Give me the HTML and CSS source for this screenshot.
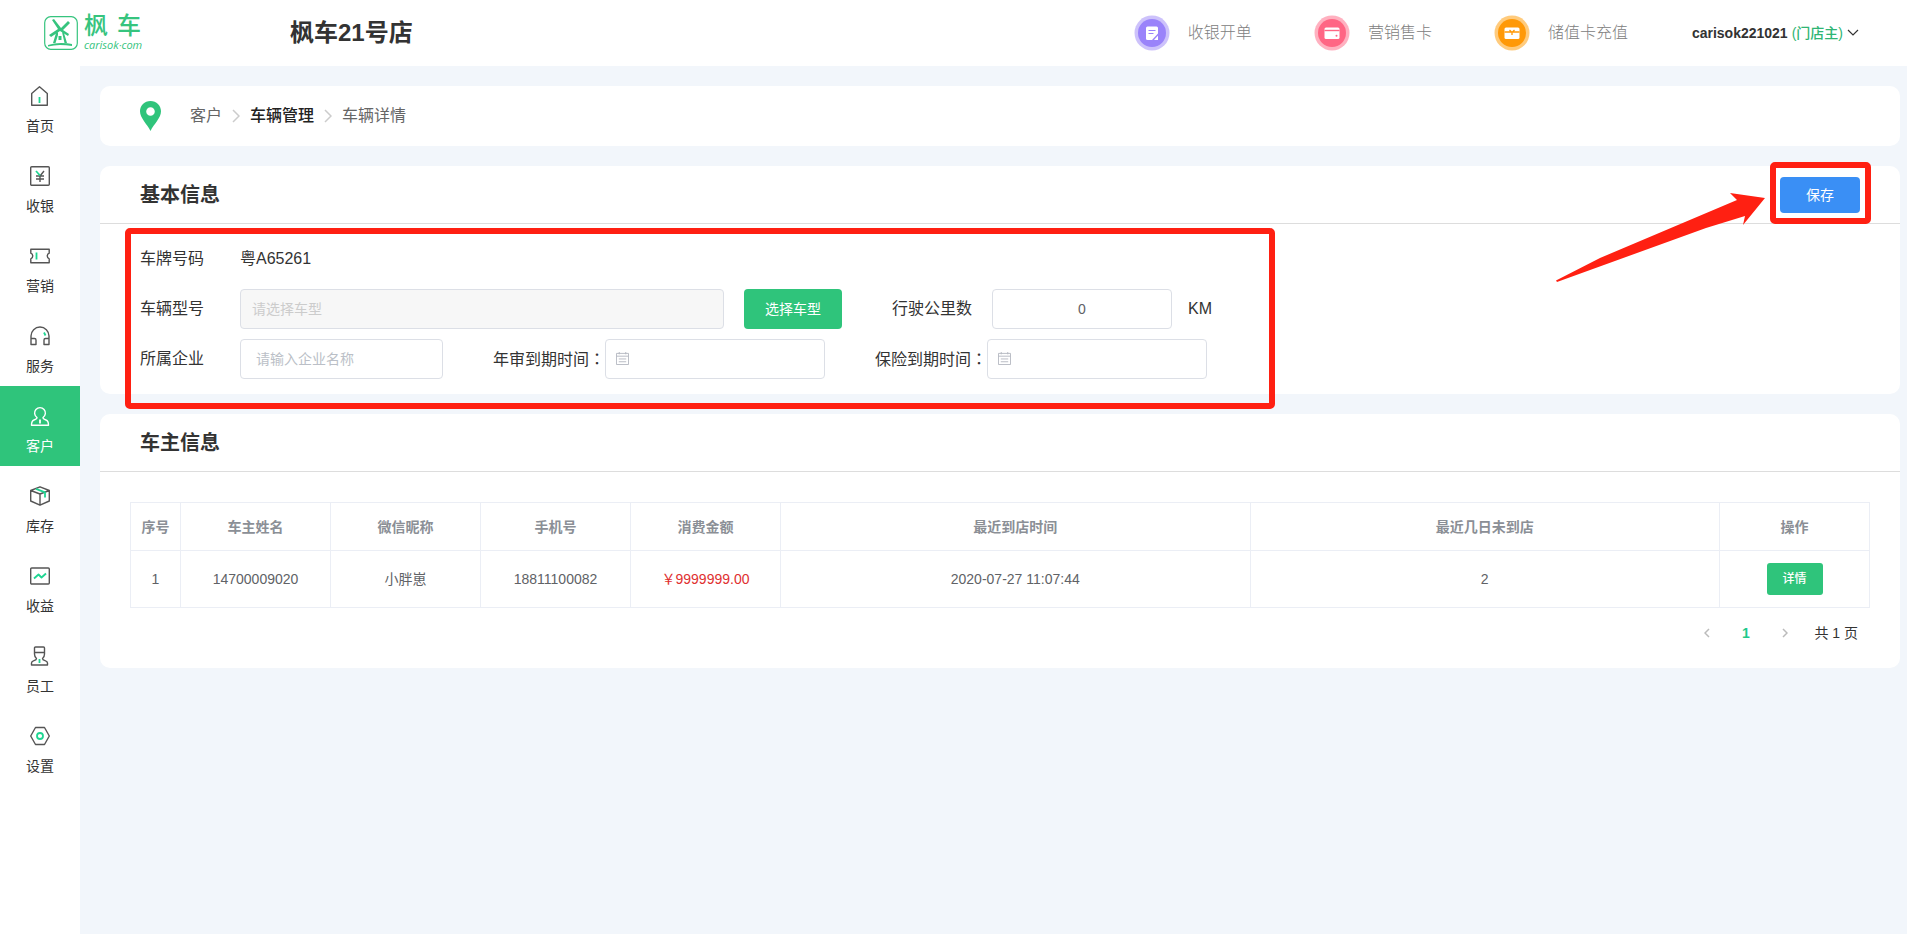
FILE: index.html
```
<!DOCTYPE html>
<html lang="zh-CN">
<head>
<meta charset="utf-8">
<title>车辆详情</title>
<link rel="stylesheet" href="styles.css">
</head>
<body>
<header class="topbar">
  <a class="logo" href="#" aria-label="枫车">
    <svg class="logo-mark" viewBox="0 0 34 34" aria-hidden="true">
      <rect x="0.7" y="0.7" width="32.6" height="32.6" rx="6" fill="none" stroke="#36c47e" stroke-width="1.200"/>
      <g fill="#36c47e">
        <path d="M8 4l2-1 7 9 7-7 2 2-7 7 6 4-1 2-8-5-9 6-2-2 9-6z"/>
        <path d="M12 17l2-1v3l-2.500 8H9zM18 16l2 1 3 10h-2.500zM14.500 20h3v4h-3z"/>
        <path d="M4 29q6-2 13-2t11 1v2q-6-1-12-1t-12 1.500z"/>
      </g>
    </svg>
    <span class="logo-words"><span class="logo-cn"><span>枫</span><span>车</span></span><span class="logo-en">carisok·com</span></span>
  </a>
  <h1 class="shop">枫车21号店</h1>
  <nav class="quick" aria-label="快捷入口">
    <a href="#"><svg viewBox="0 0 36 36" aria-hidden="true"><circle cx="18" cy="18" r="17.500" fill="#cdc2fb"/><circle cx="18" cy="18" r="14" fill="#9a83fa"/><path d="M13.500 11.500h9q1.500 0 1.500 1.500v12h-10.500q-1.500 0-1.500-1.500V13q0-1.500 1.500-1.500z" fill="#fff"/><path d="M14.500 15.500h7M14.500 18.500h5" stroke="#9a83fa" stroke-width="1.200"/><path d="M18.500 25.500l6-6.500" stroke="#9a83fa" stroke-width="1.400"/></svg>收银开单</a>
    <a href="#"><svg viewBox="0 0 36 36" aria-hidden="true"><circle cx="18" cy="18" r="17.500" fill="#ffb1c0"/><circle cx="18" cy="18" r="14" fill="#ff6684"/><rect x="10.500" y="12.500" width="15" height="11.500" rx="1.500" fill="#fff"/><path d="M10.500 15.500h15" stroke="#ff6684" stroke-width="1.400"/><circle cx="22.500" cy="20.800" r="1" fill="#ff6684"/></svg>营销售卡</a>
    <a href="#"><svg viewBox="0 0 36 36" aria-hidden="true"><circle cx="18" cy="18" r="17.500" fill="#ffcb7d"/><circle cx="18" cy="18" r="14" fill="#ff9908"/><rect x="10.500" y="12.500" width="15" height="11.500" rx="1.500" fill="#fff"/><path d="M10.500 17h15M15.500 15l2.500 2.500 2.500-2.500M18 17.500v2.500" stroke="#ff9908" stroke-width="1.300" fill="none"/></svg>储值卡充值</a>
  </nav>
  <button class="user" type="button"><span>carisok221021</span><span class="role">(门店主)</span><svg viewBox="0 0 12 8" aria-hidden="true"><path d="M1 1l5 5 5-5" fill="none" stroke="#333" stroke-width="1.200"/></svg></button>
</header>

<div class="shell">
  <nav class="side" aria-label="主菜单">
    <a href="#"><svg viewBox="0 0 20 20"><path d="M1.700 7.500L9.500 .8l7.800 6.700v11.700H1.700z"/><path class="hl" d="M9.500 11v6"/></svg>首页</a>
    <a href="#"><svg viewBox="0 0 20 20"><rect x=".7" y=".7" width="18.600" height="18.600" rx="1"/><path d="M14 5l-4 5M6 10h8M6 13h8M10 10v6"/><path class="hl" d="M6 5l4 4.500"/></svg>收银</a>
    <a href="#"><svg viewBox="0 0 20 20"><path d="M.8 3.300h18.400v3.900a3 3 0 0 0 0 5.600v3.900H.8v-3.900a3 3 0 0 0 0-5.600z"/><path class="hl" d="M6.500 6.500v7"/></svg>营销</a>
    <a href="#"><svg viewBox="0 0 20 20"><path d="M1 17.500V10a9 9 0 0 1 18 0v7.500M1 12.500h3.500q1.500 0 1.500 1.500v4.500H1zM19 12.500h-3.500q-1.500 0-1.500 1.500v4.500h5z"/><path class="hl" d="M14 6.500l1.500 3"/></svg>服务</a>
    <a href="#" class="on" aria-current="page"><svg viewBox="0 0 20 20"><path d="M7 11.500a5.400 5.400 0 1 1 6 0q0 1.500 3 2.500 2.500 1 2.500 5.200h-17q0-4.200 2.500-5.200 3-1 3-2.500z"/><path class="hl" d="M10 13.500v4"/></svg>客户</a>
    <a href="#"><svg viewBox="0 0 20 20"><path d="M10 .8l9.300 3.700v10.500L10 19.200.7 15V4.500zM.7 4.500L10 8l9.300-3.500M10 8v11"/><path class="hl" d="M6 2.800l9 3.600v5"/></svg>库存</a>
    <a href="#"><svg viewBox="0 0 20 20"><rect x=".7" y="2" width="18.600" height="16" rx="1"/><path class="hl" d="M4 12.500l4.500-4 3 3L16 7.500"/></svg>收益</a>
    <a href="#"><svg viewBox="0 0 20 20"><path d="M4.500 2q0-1 1-1h8q1 0 1 1v6q0 3-2 4.500 0 1.500 2.500 2.200 2.500.8 2.500 2.300v2H1.500v-2q0-1.500 2.500-2.300 2.500-.7 2.500-2.200-2-1.500-2-4.500zM4.500 6.500h10"/><path class="hl" d="M9.500 13v4"/></svg>员工</a>
    <a href="#"><svg viewBox="0 0 20 20"><path d="M5.500 1.500h9l4.800 8.500-4.800 8.500h-9L.7 10z"/><circle class="hl" cx="10" cy="10" r="3"/></svg>设置</a>
  </nav>

  <main class="main">
    <nav class="card crumbs" aria-label="面包屑">
      <svg class="pin" viewBox="0 0 21 30" aria-hidden="true"><path fill-rule="evenodd" fill="#2fc47b" d="M10.500 0C4.500 0 0 4.500 0 10.300 0 17 7 23 10.500 30 14 23 21 17 21 10.300 21 4.500 16.500 0 10.500 0zm0 6.200a4.300 4.300 0 1 1 0 8.600 4.300 4.300 0 0 1 0-8.600z"/></svg>
      <a href="#">客户</a>
      <svg class="sep" viewBox="0 0 8 14" aria-hidden="true"><path d="M1 1l6 6-6 6"/></svg>
      <a href="#" class="strong">车辆管理</a>
      <svg class="sep" viewBox="0 0 8 14" aria-hidden="true"><path d="M1 1l6 6-6 6"/></svg>
      <span>车辆详情</span>
    </nav>

    <section class="card basic">
      <div class="card-head"><h2>基本信息</h2><button class="save" type="submit" form="vehicle">保存</button></div>
      <form class="form" id="vehicle">
        <div class="row"><span class="lab">车牌号码</span><span>粤A65261</span></div>
        <div class="row">
          <label class="lab" for="model">车辆型号</label><input class="model" id="model" placeholder="请选择车型" disabled>
          <button class="pick" type="button">选择车型</button>
          <label class="km-lab" for="km">行驶公里数</label><input class="km" id="km" value="0"><span class="unit">KM</span>
        </div>
        <div class="row">
          <label class="lab" for="corp">所属企业</label><input class="corp" id="corp" placeholder="请输入企业名称">
          <label class="date-lab" for="check">年审到期时间<span class="colon" lang="zh-TW">：</span></label>
          <span class="date"><input id="check"><svg viewBox="0 0 14 14" aria-hidden="true"><path d="M.5 1.500h13v12H.5zM.5 4.500h13M3.500 0v2.500M10.500 0v2.500M3 7.500h8M3 10.500h8"/></svg></span>
          <label class="date-lab" for="insure">保险到期时间<span class="colon" lang="zh-TW">：</span></label>
          <span class="date"><input id="insure"><svg viewBox="0 0 14 14" aria-hidden="true"><path d="M.5 1.500h13v12H.5zM.5 4.500h13M3.500 0v2.500M10.500 0v2.500M3 7.500h8M3 10.500h8"/></svg></span>
        </div>
      </form>
      <div class="mark mark-form"></div>
      <div class="mark mark-save"></div>
      <svg class="arrow" viewBox="0 0 210 92" aria-hidden="true"><path fill="#ff2012" d="M0 88.500L44 66 181 8 174 1 209 6 187 33 189 24 150 36 1 90z"/></svg>
    </section>

    <section class="card">
      <div class="card-head"><h2>车主信息</h2></div>
      <div class="table-wrap">
        <table>
          <colgroup><col class="c-no"><col class="c-m"><col class="c-m"><col class="c-m"><col class="c-m"><col><col><col class="c-m"></colgroup>
          <thead><tr><th>序号</th><th>车主姓名</th><th>微信昵称</th><th>手机号</th><th>消费金额</th><th>最近到店时间</th><th>最近几日未到店</th><th>操作</th></tr></thead>
          <tbody><tr><td>1</td><td>14700009020</td><td>小胖崽</td><td>18811100082</td><td class="money">￥9999999.00</td><td>2020-07-27 11:07:44</td><td>2</td><td><button class="detail" type="button">详情</button></td></tr></tbody>
        </table>
        <div class="pager">
          <button type="button" aria-label="上一页"><svg viewBox="0 0 6 10"><path d="M5 1L1 5l4 4"/></svg></button>
          <button type="button" class="cur">1</button>
          <button type="button" aria-label="下一页"><svg viewBox="0 0 6 10"><path d="M1 1l4 4-4 4"/></svg></button>
          <span class="total">共 1 页</span>
        </div>
      </div>
    </section>
  </main>
</div>
</body>
</html>
```
FILE: styles.css
```
* { box-sizing: border-box; }
body {
  margin: 0;
  min-height: 100vh;
  display: flex;
  flex-direction: column;
  background: #f2f6fb;
  color: #333;
  font: 16px/20px "Liberation Sans", "Noto Sans CJK SC", sans-serif;
}
a { color: inherit; text-decoration: none; }
button, input { font: inherit; margin: 0; }
button { border: 0; padding: 0; background: none; cursor: pointer; }
h1, h2 { margin: 0; }

.topbar { display: flex; align-items: center; height: 66px; padding: 0 48px 0 44px; background: #fff; }
.logo { display: flex; align-items: center; gap: 6px; width: 246px; color: #36c47e; }
.logo-mark { width: 34px; height: 34px; }
.logo-words { display: flex; flex-direction: column; gap: 3px; }
.logo-cn { display: flex; gap: 9px; font-size: 24px; line-height: 20px; font-weight: 500; }
.logo-en { font: italic 11px/12px "Open Sans", sans-serif; }
.shop { font-size: 24px; line-height: 32px; }
.quick { display: flex; gap: 62px; margin-left: auto; color: #808080; font-weight: 300; }
.quick a { display: flex; align-items: center; gap: 18px; }
.quick svg { width: 36px; height: 36px; }
.user { display: flex; align-items: center; gap: 4px; margin-left: 64px; font-size: 14px; font-weight: 700; color: #333; }
.role { color: #2fb574; font-weight: 500; }
.user svg { width: 12px; height: 8px; }

.shell { display: flex; flex: 1; }
.side { flex: none; width: 80px; background: #fff; }
.side a { display: flex; flex-direction: column; align-items: center; gap: 10px; height: 80px; padding-top: 20px; font-size: 14px; }
.side svg { width: 20px; height: 20px; fill: none; stroke: #555; stroke-width: 1.4; stroke-linejoin: round; }
.side .hl { stroke: #1fd592; stroke-width: 1.8; }
.side .on { background: #2fc47b; color: #fff; }
.side .on svg, .side .on .hl { stroke: #fff; }

.main { flex: 1; display: flex; flex-direction: column; gap: 20px; padding: 20px 7px 20px 20px; }
.card { background: #fff; border-radius: 10px; }
.crumbs { display: flex; align-items: center; height: 60px; padding-left: 40px; color: #666; }
.pin { width: 21px; height: 30px; margin-right: 29px; }
.sep { width: 8px; height: 14px; margin: 0 10px; fill: none; stroke: #ccc; stroke-width: 1.5; }
.strong { color: #222; font-weight: 500; }

.basic { position: relative; }
.card-head { display: flex; align-items: center; justify-content: space-between; height: 58px; padding: 0 40px; border-bottom: 1px solid #ddd; }
.card-head h2 { font-size: 20px; line-height: 28px; }
.save { width: 80px; height: 36px; border-radius: 4px; background: #3a8ff5; color: #fff; font-size: 14px; }

.form { display: flex; flex-direction: column; gap: 10px; padding: 15px 40px; }
.row { display: flex; align-items: center; height: 40px; }
.lab { width: 100px; }
.form input { height: 40px; border: 1px solid #dcdfe6; border-radius: 4px; background: #fff; color: #606266; font-size: 14px; }
.form input::placeholder { color: #bbbfc7; }
.form .model { width: 484px; padding: 0 11px; background: #f7f7f7; }
.form .model::placeholder { color: #ccc; }
.pick { width: 98px; height: 40px; margin: 0 50px 0 20px; border-radius: 4px; background: #2fc47b; color: #fff; font-size: 14px; }
.form .km { width: 180px; margin: 0 16px 0 20px; text-align: center; }
.form .corp { width: 203px; padding: 0 15px; }
.date-lab { margin-left: 50px; }
.colon { font-family: "Noto Sans CJK TC", sans-serif; }
.date { position: relative; }
.date input { display: block; width: 220px; padding: 0 10px 0 34px; }
.date svg { position: absolute; left: 11px; top: 13px; width: 13px; height: 13px; fill: none; stroke: #b4b8c0; }

.mark { position: absolute; border: 6px solid #ff2012; border-radius: 5px; pointer-events: none; }
.mark-form { left: 25px; top: 62px; width: 1150px; height: 181px; }
.mark-save { right: 29px; top: -4px; width: 101px; height: 62px; }
.arrow { position: absolute; right: 134px; top: 26px; width: 210px; height: 92px; pointer-events: none; }

.table-wrap { padding: 30px 30px 20px; }
table { width: 100%; table-layout: fixed; border-collapse: collapse; font-size: 14px; text-align: center; color: #606266; }
th, td { border: 1px solid #ebeef5; padding: 0; }
th { height: 48px; color: #8b8f96; font-weight: 700; }
td { height: 57px; }
.c-no { width: 50px; }
.c-m { width: 150px; }
.money { color: #e03030; }
.detail { width: 56px; height: 32px; border-radius: 3px; background: #2fc47b; color: #fff; font-size: 12px; font-weight: 500; }
.pager { display: flex; align-items: center; justify-content: flex-end; height: 30px; margin-top: 10px; padding-right: 12px; font-size: 14px; }
.pager button { width: 39px; height: 28px; }
.pager svg { width: 6px; height: 10px; fill: none; stroke: #bbb; stroke-width: 1.5; }
.pager .cur { color: #1fc98b; font-weight: 700; }
.total { margin-left: 10px; }
```
